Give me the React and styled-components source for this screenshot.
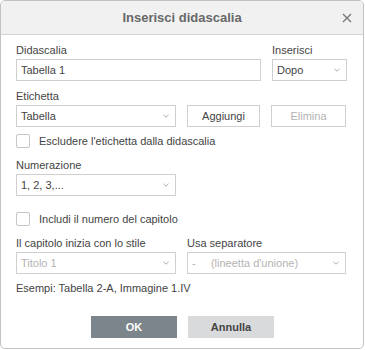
import styled, { createGlobalStyle } from "styled-components";

const GlobalStyle = createGlobalStyle`
  html, body {
    margin: 0;
    padding: 0;
    background: #ffffff;
  }
  body {
    font-family: "Liberation Sans", Arial, sans-serif;
    font-size: 11px;
    color: #444444;
  }
`;

const Dialog = styled.div`
  box-sizing: border-box;
  width: 364px;
  height: 349px;
  border: 1px solid #c2c2c2;
  border-radius: 5px;
  background: #ffffff;
  overflow: hidden;
  display: flex;
  flex-direction: column;
`;

const Header = styled.div`
  position: relative;
  height: 33px;
  flex: 0 0 33px;
  background: #f1f1f1;
  border-bottom: 1px solid #d6d6d6;
  display: flex;
  align-items: center;
  justify-content: center;
  h1 {
    margin: 0;
    font-size: 13px;
    font-weight: bold;
    color: #686868;
  }
`;

const Close = styled.button`
  position: absolute;
  right: 10px;
  top: 11px;
  width: 12px;
  height: 12px;
  padding: 0;
  border: none;
  background: transparent;
  display: flex;
  align-items: center;
  justify-content: center;
`;

const Body = styled.div`
  padding: 8px 17px 0 15px;
  display: flex;
  flex-direction: column;
`;

const Grid = styled.div`
  display: grid;
  grid-template-columns: ${(p) => p.cols};
  column-gap: 11px;
  margin-top: ${(p) => p.top || 0}px;
`;

const Field = styled.div`
  display: flex;
  flex-direction: column;
  justify-content: flex-end;
`;

const Label = styled.label`
  display: block;
  line-height: 14px;
  height: 14px;
  margin-bottom: 2px;
  color: #444444;
`;

const Box = styled.div`
  box-sizing: border-box;
  height: 22px;
  border: 1px solid #cfcfcf;
  background: #ffffff;
  display: flex;
  align-items: center;
  padding: 0 6px 0 4px;
  color: ${(p) => (p.disabled ? "#b3b3b3" : "#444444")};
  line-height: 20px;
  span {
    flex: 1;
    white-space: nowrap;
  }
`;

const Button = styled.button`
  box-sizing: border-box;
  height: 22px;
  border: 1px solid #cfcfcf;
  background: #ffffff;
  font-family: inherit;
  font-size: 11px;
  color: ${(p) => (p.disabled ? "#b3b3b3" : "#444444")};
  padding: 0;
`;

const CheckRow = styled.div`
  display: flex;
  align-items: center;
  gap: 9px;
  margin-top: ${(p) => p.top}px;
  line-height: 14px;
`;

const Check = styled.span`
  box-sizing: border-box;
  width: 14px;
  height: 14px;
  border: 1px solid #c6c6c6;
  border-radius: 2px;
  background: #ffffff;
`;

const Example = styled.div`
  margin-top: 7px;
  line-height: 14px;
`;

const Footer = styled.div`
  display: flex;
  justify-content: center;
  gap: 11px;
  margin-top: 21px;
  padding-left: 3px;
`;

const FooterButton = styled.button`
  width: 86px;
  height: 22px;
  border: none;
  padding: 0;
  font-family: inherit;
  font-size: 11px;
  font-weight: bold;
  background: ${(p) => (p.primary ? "#7d858c" : "#d8dadc")};
  color: ${(p) => (p.primary ? "#ffffff" : "#444444")};
`;

const Chevron = () => (
  <svg width="6" height="4" viewBox="0 0 6 4">
    <path d="M0.5 0.8 L3 3.2 L5.5 0.8" fill="none" stroke="#a0a0a0" strokeWidth="0.9" />
  </svg>
);

const Select = ({ value, disabled }) => (
  <Box disabled={disabled}>
    <span>{value}</span>
    <Chevron />
  </Box>
);

const App = () => {
  return (
    <>
      <GlobalStyle />
      <Dialog>
        <Header>
          <h1>Inserisci didascalia</h1>
          <Close aria-label="Chiudi">
            <svg width="10" height="10" viewBox="0 0 10 10">
              <path d="M1 1 L9 9 M9 1 L1 9" stroke="#7a7a7a" strokeWidth="1.4" />
            </svg>
          </Close>
        </Header>
        <Body>
          <Grid cols="245px 75px">
            <Field>
              <Label>Didascalia</Label>
              <Box>
                <span>Tabella 1</span>
              </Box>
            </Field>
            <Field>
              <Label>Inserisci</Label>
              <Select value="Dopo" />
            </Field>
          </Grid>

          <Grid cols="160px 73px 75px" top={8}>
            <Field>
              <Label>Etichetta</Label>
              <Select value="Tabella" />
            </Field>
            <Field>
              <Button>Aggiungi</Button>
            </Field>
            <Field>
              <Button disabled>Elimina</Button>
            </Field>
          </Grid>

          <CheckRow top={7}>
            <Check />
            <span>Escludere l'etichetta dalla didascalia</span>
          </CheckRow>

          <Grid cols="160px" top={10}>
            <Field>
              <Label>Numerazione</Label>
              <Select value="1, 2, 3,..." />
            </Field>
          </Grid>

          <CheckRow top={16}>
            <Check />
            <span>Includi il numero del capitolo</span>
          </CheckRow>

          <Grid cols="160px 159px" top={10}>
            <Field>
              <Label>Il capitolo inizia con lo stile</Label>
              <Select value="Titolo 1" disabled />
            </Field>
            <Field>
              <Label>Usa separatore</Label>
              <Select value={"-\u00a0\u00a0\u00a0\u00a0\u00a0(lineetta d'unione)"} disabled />
            </Field>
          </Grid>

          <Example>Esempi: Tabella 2-A, Immagine 1.IV</Example>

          <Footer>
            <FooterButton primary>OK</FooterButton>
            <FooterButton>Annulla</FooterButton>
          </Footer>
        </Body>
      </Dialog>
    </>
  );
};

export default App;
